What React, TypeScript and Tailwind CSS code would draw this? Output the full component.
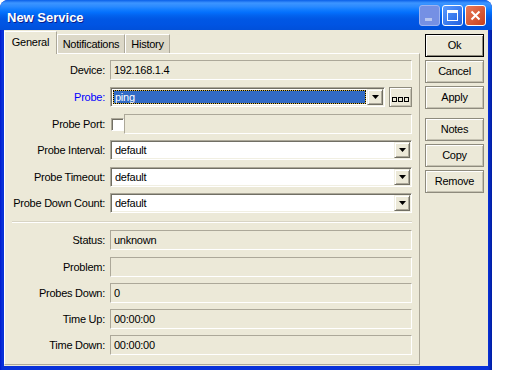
import React from 'react';

const sunken =
  'border border-t-[#ACA899] border-l-[#ACA899] border-b-white border-r-white';

const Label: React.FC<{ text: string; blue?: boolean }> = ({ text, blue }) => (
  <div className={`w-[100px] shrink-0 text-right ${blue ? 'text-[#0000FF]' : 'text-black'}`}>
    {text}
  </div>
);

const ReadField: React.FC<{ value?: string }> = ({ value }) => (
  <div className={`flex-1 h-[20px] ${sunken} bg-[#ECE9D8] flex items-center pl-[3px]`}>
    {value}
  </div>
);

const Arrow = () => (
  <div className="w-[16px] h-[16px] shrink-0 bg-[#ECE9D8] border border-t-[#F1EFE2] border-l-[#F1EFE2] border-b-[#716F64] border-r-[#716F64] shadow-[inset_1px_1px_0_#fff,inset_-1px_-1px_0_#ACA899] flex items-center justify-center">
    <svg width="7" height="4" viewBox="0 0 7 4">
      <path d="M0 0h7L3.5 4z" fill="#000" />
    </svg>
  </div>
);

const Combo: React.FC<{ value: string }> = ({ value }) => (
  <div
    className={`flex-1 h-[20px] ${sunken} bg-white shadow-[inset_1px_1px_0_#716F64,inset_-1px_-1px_0_#F1EFE2] flex items-stretch p-[1px]`}
  >
    <div className="flex-1 flex items-center pl-[3px]">{value}</div>
    <Arrow />
  </div>
);

const Row: React.FC<{ className?: string; children: React.ReactNode }> = ({ className, children }) => (
  <div className={`flex items-center h-[20px] pr-[7px] ${className ?? ''}`}>{children}</div>
);

const Btn: React.FC<{ text: string; def?: boolean; className?: string }> = ({ text, def, className }) => (
  <div
    className={`h-[23px] flex items-center justify-center bg-[#ECE9D8] ${
      def
        ? 'border border-black shadow-[inset_1px_1px_0_#fff,inset_-1px_-1px_0_#8E8B7D]'
        : 'border border-[#8E8B7D] shadow-[inset_1px_1px_0_#fff,inset_-1px_-1px_0_#C5C2B2]'
    } ${className ?? ''}`}
  >
    {text}
  </div>
);

const Tab: React.FC<{ text: string; active?: boolean; w: string }> = ({ text, active, w }) => (
  <div
    className={`${w} flex items-center justify-center border-t border-l border-r border-t-white border-l-white border-r-[#ACA899] ${
      active
        ? 'h-[23px] bg-[#ECE9D8] -mb-[1px] relative z-10 pb-[2px]'
        : 'h-[19px] bg-[#DCD8C8]'
    }`}
  >
    {text}
  </div>
);

export default function App() {
  return (
    <div className="w-[512px] h-[384px] bg-white font-['Liberation_Sans',Arial,sans-serif] text-[11px] leading-none tracking-[-0.25px] text-black">
      <div className="w-[492px] h-[370px] flex flex-col rounded-t-[8px] overflow-hidden bg-[linear-gradient(90deg,#0019CF_0px,#0831D9_2px,#0831D9_488px,#001DA0_492px)]">
        {/* title bar */}
        <div className="h-[30px] shrink-0 flex items-center pl-[7px] pr-[6px] pt-[1px] bg-[linear-gradient(180deg,#0A5FE8_0%,#3D95FF_10%,#2A8AFF_22%,#127DFF_32%,#036FFC_42%,#0262EE_52%,#0057E5_64%,#0054E3_82%,#0050DA_100%)]">
          <div className="flex-1 pt-[3px] text-white font-bold text-[13px] tracking-normal [text-shadow:1px_1px_0_#0A1E8C]">
            New Service
          </div>
          <div className="flex gap-[2px]">
            <div className="w-[21px] h-[21px] rounded-[3px] border border-[#9DB3F0] bg-[#7590E4] flex items-end pl-[5px] pb-[4px]">
              <div className="w-[7px] h-[3px] bg-[#B7C6F0]" />
            </div>
            <div className="w-[21px] h-[21px] rounded-[3px] border border-white bg-[linear-gradient(135deg,#5A9BFF,#2260E0)] flex items-center justify-center">
              <div className="w-[11px] h-[11px] border border-white border-t-[3px]" />
            </div>
            <div className="w-[21px] h-[21px] rounded-[3px] border border-white bg-[linear-gradient(135deg,#E97A5A,#C8401C)] flex items-center justify-center">
              <svg width="11" height="11" viewBox="0 0 11 11">
                <path d="M1.5 1.5l8 8M9.5 1.5l-8 8" stroke="#fff" strokeWidth="2" />
              </svg>
            </div>
          </div>
        </div>

        {/* body */}
        <div className="flex-1 flex mx-[4px] mb-[4px] bg-[#ECE9D8]">
          <div className="w-[416px] flex flex-col">
            <div className="h-[23px] flex items-end">
              <Tab text="General" active w="w-[53px]" />
              <Tab text="Notifications" w="w-[68px]" />
              <Tab text="History" w="w-[45px]" />
            </div>
            <div className="flex-1 mb-[1px] border border-t-white border-l-white border-b-[#ACA899] border-r-[#ACA899] pt-[6px]">
              <Row>
                <Label text="Device:" />
                <div className="w-[5px]" />
                <ReadField value="192.168.1.4" />
              </Row>
              <Row className="mt-[7px]">
                <Label text="Probe:" blue />
                <div className="w-[5px]" />
                <div
                  className={`flex-1 h-[20px] ${sunken} bg-white shadow-[inset_1px_1px_0_#716F64,inset_-1px_-1px_0_#F1EFE2] flex items-stretch p-[1px]`}
                >
                  <div className="flex-1 flex p-[1px]">
                    <div className="flex-1 bg-[#D8B848] border border-dotted border-black">
                      <div className="h-full bg-[#316AC5] text-white flex items-center pl-[1px]">ping</div>
                    </div>
                  </div>
                  <Arrow />
                </div>
                <div className="w-[23px] h-[20px] ml-[4px] shrink-0 bg-[#ECE9D8] border border-[#8E8B7D] shadow-[inset_1px_1px_0_#fff,inset_-1px_-1px_0_#C5C2B2] flex items-end justify-center pb-[4px] gap-[1px]">
                  <div className="w-[5px] h-[5px] border border-black" />
                  <div className="w-[5px] h-[5px] border border-black" />
                  <div className="w-[5px] h-[5px] border border-black" />
                </div>
              </Row>
              <Row className="mt-[7px]">
                <Label text="Probe Port:" />
                <div className="w-[6px]" />
                <div
                  className={`w-[13px] h-[13px] shrink-0 ${sunken} bg-white shadow-[inset_1px_1px_0_#716F64]`}
                />
                <ReadField />
              </Row>
              <Row className="mt-[6px]">
                <Label text="Probe Interval:" />
                <div className="w-[5px]" />
                <Combo value="default" />
              </Row>
              <Row className="mt-[7px]">
                <Label text="Probe Timeout:" />
                <div className="w-[5px]" />
                <Combo value="default" />
              </Row>
              <Row className="mt-[6px]">
                <Label text="Probe Down Count:" />
                <div className="w-[5px]" />
                <Combo value="default" />
              </Row>

              <div className="mt-[8px] ml-[7px] mr-[7px] h-[2px] border-t border-t-[#D8D4C4] border-b border-b-white" />

              <Row className="mt-[7px]">
                <Label text="Status:" />
                <div className="w-[5px]" />
                <ReadField value="unknown" />
              </Row>
              <Row className="mt-[7px]">
                <Label text="Problem:" />
                <div className="w-[5px]" />
                <ReadField />
              </Row>
              <Row className="mt-[6px]">
                <Label text="Probes Down:" />
                <div className="w-[5px]" />
                <ReadField value="0" />
              </Row>
              <Row className="mt-[6px]">
                <Label text="Time Up:" />
                <div className="w-[5px]" />
                <ReadField value="00:00:00" />
              </Row>
              <Row className="mt-[6px]">
                <Label text="Time Down:" />
                <div className="w-[5px]" />
                <ReadField value="00:00:00" />
              </Row>
            </div>
          </div>

          <div className="w-[59px] ml-[5px] pt-[4px] flex flex-col gap-[3px]">
            <Btn text="Ok" def />
            <Btn text="Cancel" />
            <Btn text="Apply" />
            <Btn text="Notes" className="mt-[6px]" />
            <Btn text="Copy" />
            <Btn text="Remove" />
          </div>
        </div>
      </div>
    </div>
  );
}
